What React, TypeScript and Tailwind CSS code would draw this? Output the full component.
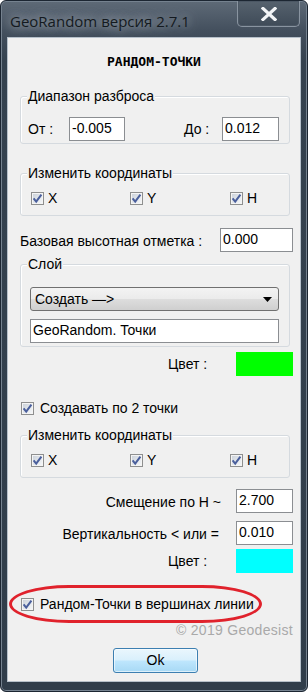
import type { ReactNode } from "react";

const UI = "font-['Liberation_Sans',Arial,sans-serif] text-[14px] text-black";

function CheckBox() {
  return (
    <svg width="13" height="13" viewBox="0 0 13 13" className="shrink-0">
      <defs>
        <linearGradient id="cbfill" x1="0" y1="0" x2="1" y2="1">
          <stop offset="0" stopColor="#cdd3db" />
          <stop offset="1" stopColor="#f4f6f8" />
        </linearGradient>
      </defs>
      <rect x="0.5" y="0.5" width="12" height="12" fill="#f4f4f4" stroke="#8e8f8f" />
      <rect x="2" y="2" width="9" height="9" fill="url(#cbfill)" />
      <path d="M2.6 6.4 L5.2 9.6 L10.4 2.6" fill="none" stroke="#4a5f9c" strokeWidth="2" />
    </svg>
  );
}

function Check({ label, className = "" }: { label: string; className?: string }) {
  return (
    <div className={`flex h-[16px] items-center ${className}`}>
      <CheckBox />
      <span className="ml-[4px] leading-[16px]">{label}</span>
    </div>
  );
}

function TextBox({ value, className = "" }: { value: string; className?: string }) {
  return (
    <div
      className={`h-[24px] shrink-0 border border-[#8b8e92] bg-white pl-[2px] pt-[2px] leading-[16px] ${className}`}
    >
      {value}
    </div>
  );
}

// Win7-style group box: caption sits on the top border.
function Group({
  caption,
  className = "",
  children,
}: {
  caption: string;
  className?: string;
  children: ReactNode;
}) {
  return (
    <div
      className={`relative ml-[12px] w-[270px] rounded-[3px] border border-[#d5dadf] shadow-[inset_1px_1px_0_#ffffff] ${className}`}
    >
      <span className="absolute left-[6px] top-[-9px] bg-[#f0f0f0] px-[1px] leading-[16px]">
        {caption}
      </span>
      {children}
    </div>
  );
}

function CoordGroup({ className = "" }: { className?: string }) {
  return (
    <Group caption="Изменить координаты" className={`h-[43px] ${className}`}>
      <div className="flex pl-[10px] pt-[16px]">
        <Check label="X" className="w-[99px]" />
        <Check label="Y" className="w-[100px]" />
        <Check label="H" />
      </div>
    </Group>
  );
}

export default function App() {
  return (
    <div
      className={`flex h-[692px] w-[308px] flex-col rounded-[6px] border border-[#1c2632] bg-[linear-gradient(to_bottom,#5e6a77_0px,#434f5d_30px,#35424f_60px,#303d4a_100%)] shadow-[inset_0_0_0_1px_#75828f] ${UI}`}
    >
      {/* title bar */}
      <div className="flex h-[36px] shrink-0 items-start justify-between">
        <span className="ml-[9px] mt-[10px] font-['Open_Sans','Liberation_Sans',sans-serif] text-[15px] leading-[20px] text-[#141a20] [text-shadow:0_0_10px_rgba(200,208,216,0.9),0_0_16px_rgba(200,208,216,0.7)]">
          GeoRandom версия 2.7.1
        </span>
        <div className="mr-[7px] flex h-[26px] w-[63px] items-center justify-center rounded-b-[5px] border border-t-0 border-[#8994a0] bg-[linear-gradient(to_bottom,#56626e,#3f4b58)] shadow-[inset_0_0_0_1px_#4b5764]">
          <svg width="16" height="14" viewBox="0 0 16 14">
            <path
              d="M2 1.5 L14 12.5 M14 1.5 L2 12.5"
              stroke="#f2f4f6"
              strokeWidth="3.2"
              strokeLinecap="square"
            />
          </svg>
        </div>
      </div>

      {/* client area */}
      <div className="mx-[6px] mb-[9px] flex flex-1 flex-col border border-[#b6c0ca] bg-[#f0f0f0]">
        <div className="mt-[15px] h-[18px] text-center font-['DejaVu_Sans_Mono',monospace] text-[13px] font-bold leading-[18px]">
          РАНДОМ-ТОЧКИ
        </div>

        <Group caption="Диапазон разброса" className="mt-[25px] h-[48px]">
          <div className="flex items-center pl-[7px] pt-[20px]">
            <span className="w-[41px]">От :</span>
            <TextBox value="-0.005" className="w-[56px]" />
            <span className="ml-[59px] w-[38px]">До :</span>
            <TextBox value="0.012" className="w-[57px]" />
          </div>
        </Group>

        <CoordGroup className="mt-[29px]" />

        <div className="ml-[12px] mr-[7px] mt-[12px] flex items-center">
          <span className="flex-1 pt-[3px]">Базовая высотная отметка :</span>
          <TextBox value="0.000" className="w-[73px]" />
        </div>

        <Group caption="Слой" className="mt-[12px] h-[83px]">
          <div className="flex flex-col pl-[9px] pt-[22px]">
            <div className="flex h-[24px] w-[249px] items-center justify-between rounded-[3px] border border-[#707070] bg-[linear-gradient(to_bottom,#f3f3f3_0%,#ebebeb_48%,#dddddd_52%,#cfcfcf_100%)] pl-[4px] pr-[6px]">
              <span>Создать —&gt;</span>
              <svg width="9" height="5" viewBox="0 0 9 5">
                <path d="M0 0 H9 L4.5 5 Z" fill="#000" />
              </svg>
            </div>
            <TextBox value="GeoRandom. Точки" className="mt-[8px] w-[249px]" />
          </div>
        </Group>

        <div className="mr-[7px] mt-[5px] flex h-[24px] items-center">
          <span className="ml-[160px]">Цвет :</span>
          <div className="ml-auto h-[24px] w-[57px] bg-[#00ff00]" />
        </div>

        <Check label="Создавать по 2 точки" className="ml-[13px] mt-[24px] [&>span]:ml-[6px]" />

        <CoordGroup className="mt-[19px]" />

        <div className="mr-[7px] mt-[11px] flex items-center justify-end">
          <span className="pt-[2px]">Смещение по H ~</span>
          <TextBox value="2.700" className="ml-[15px] w-[57px]" />
        </div>
        <div className="mr-[7px] mt-[8px] flex items-center justify-end">
          <span className="pt-[2px]">Вертикальность &lt; или =</span>
          <TextBox value="0.010" className="ml-[17px] w-[57px]" />
        </div>
        <div className="mr-[7px] mt-[4px] flex h-[24px] items-center">
          <span className="ml-[160px]">Цвет :</span>
          <div className="ml-auto h-[24px] w-[57px] bg-[#00ffff]" />
        </div>

        <div className="ml-[1px] mt-[12px] flex h-[38px] w-[253px] items-center rounded-[60px/19px] border-[3px] border-[#e0222c] pl-[9px]">
          <Check label="Рандом-Точки в вершинах линии" className="[&>span]:ml-[6px]" />
        </div>

        <div className="mr-[7px] h-[14px] text-right leading-[14px] tracking-[0.3px] text-[#a9a9a9]">
          © 2019 Geodesist
        </div>

        <div className="ml-[105px] mt-[11px] flex h-[25px] w-[85px] items-center justify-center rounded-[3px] border border-[#3c7fb1] bg-[linear-gradient(to_bottom,#eaf6fd_0%,#d9f0fc_48%,#bee6fd_52%,#a7d9f5_100%)] shadow-[inset_0_0_0_1px_rgba(255,255,255,0.6)]">
          Ok
        </div>
      </div>
    </div>
  );
}
